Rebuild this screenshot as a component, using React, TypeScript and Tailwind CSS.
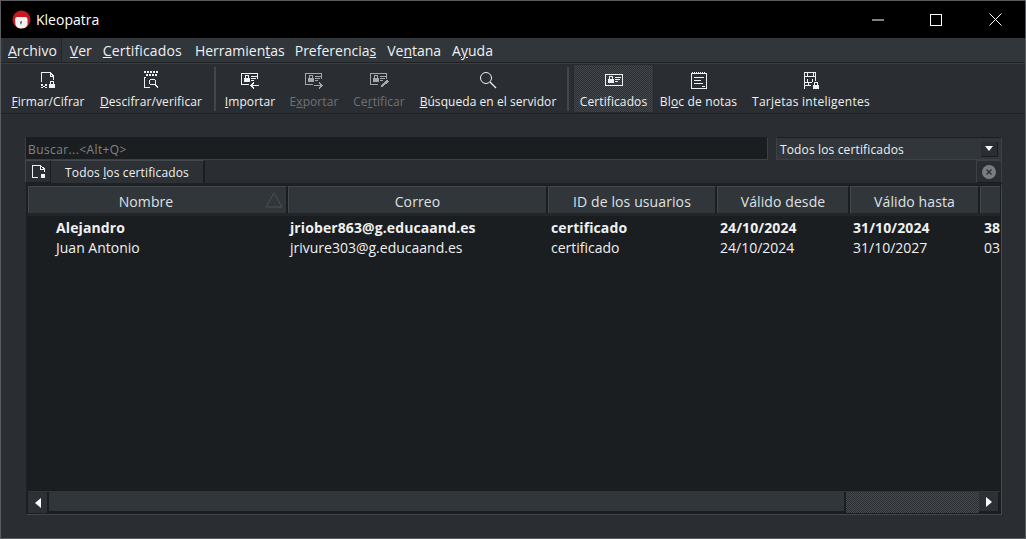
import { ReactNode } from "react";

const font = "font-['Open_Sans','Noto_Sans',sans-serif]";

function Ic({ children }: { children: ReactNode }) {
  return (
    <svg width="20" height="20" viewBox="0 0 20 20" fill="none" stroke="currentColor" strokeWidth="1" shapeRendering="crispEdges">
      {children}
    </svg>
  );
}

const Lock = ({ x, y }: { x: number; y: number }) => (
  <g>
    <rect x={x + 1.5} y={y + 0.5} width="3" height="3" />
    <rect x={x} y={y + 3} width="6" height="4" fill="currentColor" stroke="none" />
  </g>
);

const IconSign = () => (
  <Ic>
    <path d="M3.5 12V2.5H12L15.5 6V10M12.5 3V6.5H15" />
    <path d="M3 14h2v2H3zM7 14h2v2H7zM3 17h2v1H3zM5 16h2v1H5zM7 17h2v1H7z" fill="currentColor" stroke="none" />
    <Lock x={11} y={11} />
  </Ic>
);

const IconDecrypt = () => (
  <Ic>
    <path d="M3 1h2v2H3zM6 1h2v2H6zM9 1h2v2H9zM12 1h2v2h-2zM15 1h2v2h-2zM5 4h2v2H5zM8 4h2v2H8zM11 4h2v2h-2zM14 4h2v2h-2zM3 7h2v1H3z" fill="currentColor" stroke="none" />
    <path d="M3.5 8v9.5H9" />
    <circle cx="11.5" cy="12" r="3" />
    <path d="M14 14.5l3 3" />
  </Ic>
);

const IconCard = ({ arrow }: { arrow?: "in" | "out" | "pen" }) => (
  <Ic>
    <path d={arrow ? "M1.5 14.5V3.5H17.5V9M1.5 14.5H9" : "M1.5 15.5V4.5H18.5V15.5Z"} />
    <Lock x={4} y={arrow ? 5 : 6} />
    <path d={arrow ? "M11 6.5h6M11 8.5h5M11 10.5h3" : "M11 7.5h6M11 9.5h5M11 11.5h3"} />
    {arrow === "in" && <path d="M19 15.5H11M14 12.5l-3 3 3 3" />}
    {arrow === "out" && <path d="M10 15.5H18M15 12.5l3 3-3 3" />}
    {arrow === "pen" && <path d="M11 16l7-6 2 2-7 5z" fill="currentColor" stroke="none" />}
  </Ic>
);

const IconSearch = () => (
  <svg width="20" height="20" viewBox="0 0 20 20" fill="none" stroke="currentColor" strokeWidth="1">
    <circle cx="8" cy="8" r="5.5" />
    <path d="M12 12l6 6" strokeWidth="1.2" />
  </svg>
);

const IconNotepad = () => (
  <Ic>
    <path d="M2.5 3.5H17.5V18.5H2.5Z" />
    <path d="M3 2h1v1H3zM5 2h1v1H5zM7 2h1v1H7zM9 2h1v1H9zM11 2h1v1h-1zM13 2h1v1h-1zM15 2h1v1h-1z" fill="currentColor" stroke="none" />
    <path d="M5 7.5h10M5 10.5h7M5 13.5h9M13 16.5h3" />
  </Ic>
);

const IconSmartcard = () => (
  <Ic>
    <path d="M3.5 18.5V2.5H14.5V11" />
    <path d="M4 6.5H14M6 3v4M12 3v4M4 12.5H11M6 9l1 3M12 9l-1 3M4 15.5H10M7 13v3" />
    <Lock x={12} y={12} />
  </Ic>
);

function ToolButton({ icon, label, disabled, active, className, labelClass = "tracking-[0.06px]" }: {
  icon: ReactNode;
  label: ReactNode;
  disabled?: boolean;
  active?: boolean;
  className: string;
  labelClass?: string;
}) {
  return (
    <div
      className={`flex h-full shrink-0 flex-col items-center justify-start ${className} ${disabled ? "text-[#6e7276]" : "text-[#eff0f1]"} ${
        active ? "bg-[repeating-conic-gradient(#45494d_0_25%,#2a2e32_0_50%)] bg-[length:2px_2px] border border-[#262a2d]" : ""
      }`}
    >
      <div className={`flex h-[20px] items-center justify-center ${active ? "mt-[5px]" : "mt-[6px]"} ${disabled ? "text-[#a5a8ab]" : ""}`}>{icon}</div>
      <span className={`mt-[4px] whitespace-nowrap text-[12px] leading-[16px] ${labelClass}`}>{label}</span>
    </div>
  );
}

const Sep = () => <div className="mx-[4px] h-[44px] w-[2px] bg-[#43474b]" />;

function HeaderCell({ label, className, sort }: { label?: string; className: string; sort?: boolean }) {
  return (
    <div className={`relative flex h-full shrink-0 items-center justify-center border-t border-l border-[#43484c] border-r-[2px] border-r-[#1b1e20] bg-[#31363b] pt-[2px] text-[14px] tracking-[0.1px] text-[#dfe1e3] ${className}`}>
      {label}
      {sort && (
        <svg className="absolute right-[3px] top-[5px]" width="18" height="16" viewBox="0 0 18 16" fill="none" stroke="#4b5054">
          <path d="M9 1L1 15H17Z" />
        </svg>
      )}
    </div>
  );
}

function Row({ cells, bold }: { cells: string[]; bold?: boolean }) {
  const widths = ["w-[260px] pl-[28px]", "w-[260px] pl-[2px]", "w-[169px] pl-[3px]", "w-[133px] pl-[3px]", "w-[130px] pl-[3px]", "w-[20px] pl-[4px]"];
  return (
    <div className={`flex h-[20px] items-center whitespace-nowrap text-[14px] leading-[19px] text-[#eff0f1] ${bold ? "font-bold tracking-[0.1px]" : ""}`}>
      {cells.map((c, i) => (
        <div key={i} className={`shrink-0 overflow-hidden ${widths[i]}`}>{c}</div>
      ))}
    </div>
  );
}

export default function App() {
  return (
    <div className={`flex h-[539px] w-[1026px] flex-col overflow-hidden border border-[#5a5d60] bg-[#2a2e32] ${font}`}>
      {/* title bar */}
      <div className="flex h-[37px] shrink-0 items-center bg-black text-white">
        <svg className="ml-[11px]" width="19" height="19" viewBox="0 0 19 19">
          <circle cx="9.5" cy="9.5" r="9" fill="#c9191e" />
          <path d="M3 9.5Q3 7 5 7H13Q15.5 7 15.5 9.5V15Q14 18.5 9 18.5 5 18.5 3.5 15Z" fill="#f4f4f4" />
          <path d="M8 12l2-1-1 4z" fill="#333" />
        </svg>
        <span className="ml-[5px] text-[14px]">Kleopatra</span>
        <div className="ml-auto flex items-center">
          <svg className="mr-[46px]" width="12" height="2" viewBox="0 0 12 2"><path d="M0 1H12" stroke="#fff" /></svg>
          <svg className="mr-[47px]" width="12" height="12" viewBox="0 0 12 12" shapeRendering="crispEdges"><rect x="0.5" y="0.5" width="11" height="11" fill="none" stroke="#fff" /></svg>
          <svg className="mr-[23px]" width="13" height="13" viewBox="0 0 13 13"><path d="M0.5 0.5L12.5 12.5M12.5 0.5L0.5 12.5" stroke="#fff" /></svg>
        </div>
      </div>

      {/* menu */}
      <div className="flex h-[25px] shrink-0 items-center border-b border-[#1f2224] bg-[#31363b] pl-[2px] text-[14px] leading-[19px] text-[#eff0f1]">
        <span className="flex h-full items-center border-r border-[#232629] bg-[#2d3136] pl-[5px] pr-[4px]"><span><u>A</u>rchivo</span></span>
        <span className="ml-[8px]"><u>V</u>er</span>
        <span className="ml-[11px] tracking-[0.15px]"><u>C</u>ertificados</span>
        <span className="ml-[13px]">Herramien<u>t</u>as</span>
        <span className="ml-[10px]">Preferencia<u>s</u></span>
        <span className="ml-[11px]">Ve<u>n</u>tana</span>
        <span className="ml-[11px]">A<u>y</u>uda</span>
      </div>

      {/* toolbar */}
      <div className="flex h-[51px] shrink-0 items-center border-b border-[#1f2224] border-t border-t-[#3a3e42]">
        <ToolButton className="ml-[9px] w-[76px]" icon={<IconSign />} label={<><u>F</u>irmar/Cifrar</>} />
        <ToolButton className="ml-[14px] w-[102px]" icon={<IconDecrypt />} label={<><u>D</u>escifrar/verificar</>} labelClass="tracking-[0.12px]" />
        <div className="ml-[8px]"><Sep /></div>
        <ToolButton className="ml-[4px] w-[52px]" icon={<IconCard arrow="in" />} label={<><u>I</u>mportar</>} />
        <ToolButton className="ml-[13px] w-[50px]" disabled icon={<IconCard arrow="out" />} label={<>E<u>x</u>portar</>} />
        <ToolButton className="ml-[13px] w-[54px]" disabled icon={<IconCard arrow="pen" />} label={<>Ce<u>r</u>tificar</>} />
        <ToolButton className="ml-[12px] w-[140px]" icon={<IconSearch />} label={<><u>B</u>úsqueda en el servidor</>} />
        <div className="ml-[5px]"><Sep /></div>
        <ToolButton className="w-[81px]" active icon={<IconCard />} label="Certificados" labelClass="tracking-[0.1px]" />
        <ToolButton className="ml-[6px] w-[77px]" icon={<IconNotepad />} label={<>Bl<u>o</u>c de notas</>} labelClass="tracking-[0.15px]" />
        <ToolButton className="ml-[15px] w-[118px]" icon={<IconSmartcard />} label="Tarjetas inteligentes" labelClass="tracking-[0.25px]" />
      </div>

      {/* main */}
      <div className="flex min-h-0 flex-1 flex-col pl-[24px] pr-[23px] pt-[23px]">
        <div className="flex h-[23px] shrink-0 items-stretch">
          <div className="flex w-[743px] items-center border border-[#3c4145] border-t-[#1c1f21] bg-[#1b1e20] pl-[2px] pt-[2px] text-[12px] tracking-[0.4px] text-[#7f8488]">
            Buscar...&lt;Alt+Q&gt;
          </div>
          <div className="ml-[8px] flex flex-1 items-center justify-between border border-[#3c4145] border-t-[#1c1f21] bg-[#31363b] pl-[3px] pr-[3px] pt-[2px] text-[12px] tracking-[0.14px] text-[#eff0f1]">
            Todos los certificados
            <span className="mb-[1px] flex h-[15px] w-[17px] items-center justify-center border-b border-r border-[#1b1e20] bg-[#2a2e32]">
              <svg width="8" height="5" viewBox="0 0 8 5"><path d="M0 0H8L4 5Z" fill="#fff" /></svg>
            </span>
          </div>
        </div>

        <div className="flex h-[24px] shrink-0 items-stretch border-b border-[#1f2224]">
          <div className="flex w-[26px] items-center justify-center border border-[#43484c] border-b-[#1b1e20] border-r-[#1b1e20] bg-[#2a2e32] text-[#eff0f1]">
            <svg width="15" height="15" viewBox="0 0 15 15" fill="none" stroke="currentColor" shapeRendering="crispEdges">
              <path d="M1.5 14V1.5H9.5L13.5 5V8M9.5 2V5.5H13M1.5 13.5H7" />
              <rect x="10" y="10" width="4" height="4" fill="currentColor" stroke="none" />
            </svg>
          </div>
          <div className="flex w-[154px] items-center justify-center border-r-[2px] border-t border-[#1b1e20] border-t-[#43484c] bg-[#2d3136] pt-[2px] text-[12px] tracking-[0.14px] text-[#eff0f1]">
            <span>Todos <u>l</u>os certificados</span>
          </div>
          <div className="flex-1" />
          <div className="flex w-[26px] items-center justify-center border border-[#3c4145] border-b-[#1b1e20] bg-[#2a2e32]">
            <svg width="14" height="14" viewBox="0 0 14 14">
              <circle cx="7" cy="7" r="7" fill="#7a7d80" />
              <path d="M4.5 4.5L9.5 9.5M9.5 4.5L4.5 9.5" stroke="#2a2e32" strokeWidth="1.2" />
            </svg>
          </div>
        </div>

        {/* table */}
        <div className="ml-[1px] flex h-[331px] shrink-0 flex-col border border-[#43484c] border-t-[#1f2224] border-l-[#1f2224] bg-[#1b1e20] pl-[1px] pr-[1px]">
          <div className="flex h-[31px] shrink-0 overflow-hidden border-b-[3px] border-[#232629] pt-[1px]">
            <HeaderCell label="Nombre" className="w-[260px] pr-[23px]" sort />
            <HeaderCell label="Correo" className="w-[260px]" />
            <HeaderCell label="ID de los usuarios" className="w-[169px]" />
            <HeaderCell label="Válido desde" className="w-[133px]" />
            <HeaderCell label="Válido hasta" className="w-[130px]" />
            <HeaderCell className="w-[24px]" />
          </div>
          <div className="min-h-0 flex-1 overflow-hidden pt-[1px]">
            <Row bold cells={["Alejandro", "jriober863@g.educaand.es", "certificado", "24/10/2024", "31/10/2024", "38"]} />
            <Row cells={["Juan Antonio", "jrivure303@g.educaand.es", "certificado", "24/10/2024", "31/10/2027", "03"]} />
          </div>
          {/* scrollbar */}
          <div className="flex h-[23px] shrink-0 items-stretch border-t border-[#31363b] pb-[1px]">
            <div className="flex w-[21px] items-center justify-center border-r-[2px] border-[#1b1e20] bg-[#2d3136]">
              <svg width="6" height="10" viewBox="0 0 6 10"><path d="M6 0V10L0 5Z" fill="#fff" /></svg>
            </div>
            <div className="w-[797px] border-r-[2px] border-b-[2px] border-[#1b1e20] bg-[#31363b]" />
            <div className="flex-1 bg-[repeating-conic-gradient(#484c50_0_25%,#2a2e32_0_50%)] bg-[length:2px_2px]" />
            <div className="flex w-[21px] items-center justify-center border-b-[2px] border-r-[2px] border-[#1b1e20] bg-[#2d3136]">
              <svg width="6" height="10" viewBox="0 0 6 10"><path d="M0 0V10L6 5Z" fill="#fff" /></svg>
            </div>
          </div>
        </div>
      </div>
    </div>
  );
}
